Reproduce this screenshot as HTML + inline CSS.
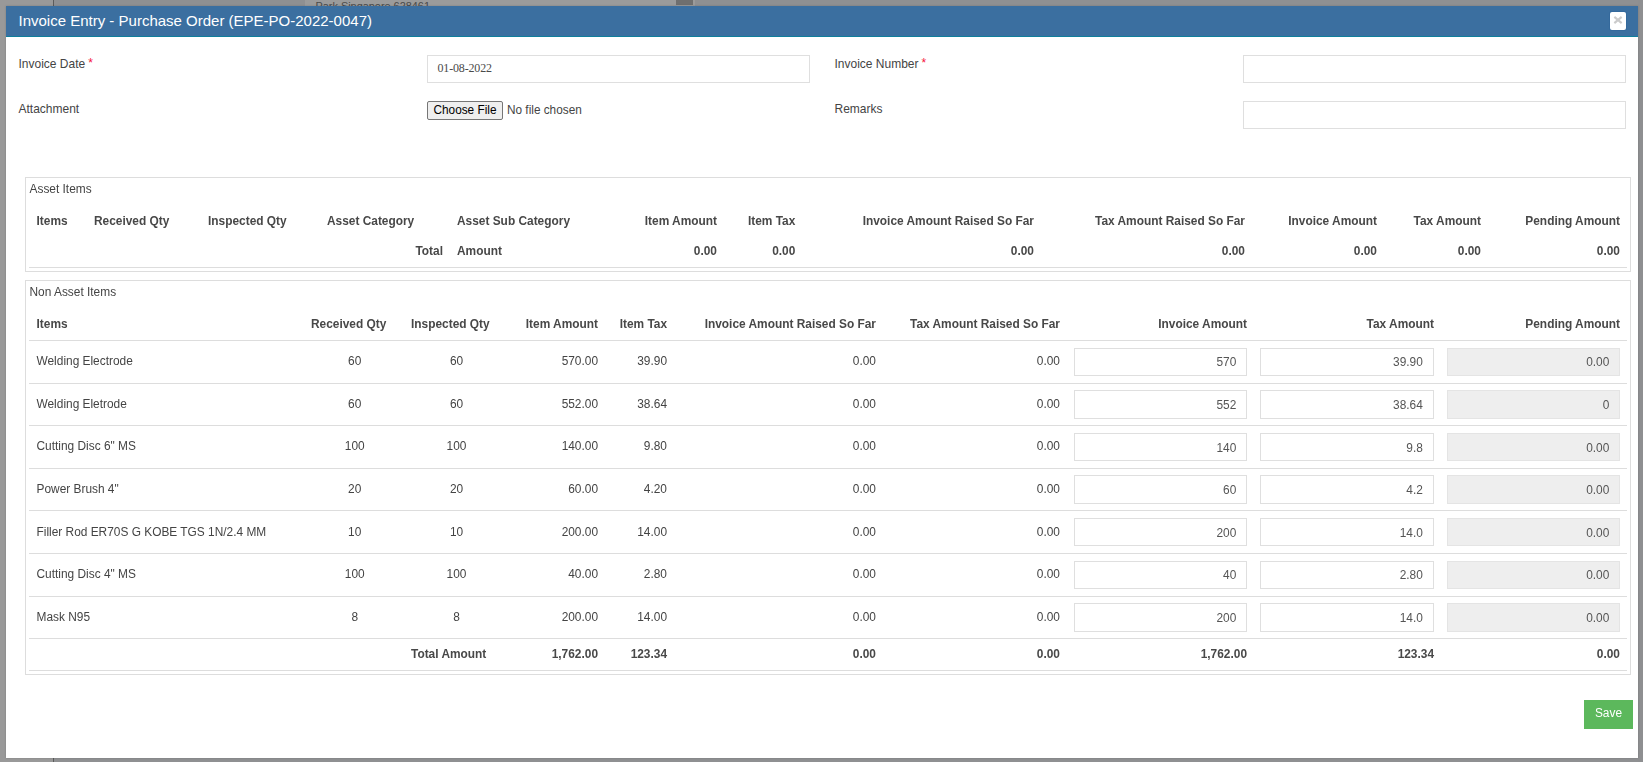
<!DOCTYPE html>
<html><head><meta charset="utf-8"><title>Invoice Entry</title><style>
html,body{margin:0;padding:0;overflow:hidden}
html{width:1643px;height:762px}
body{width:1643px;height:762px;position:relative;overflow:hidden;background:#8f9092;font-family:"Liberation Sans",sans-serif;font-size:11.9px;color:#444}
.b{position:absolute;box-sizing:border-box}
.t{position:absolute;white-space:nowrap;line-height:16px;transform:scaleY(1.08);transform-origin:0 12px}
.g{position:absolute;left:0;top:0;width:1643px;height:762px;will-change:transform}
.inp{border:1px solid #dfdfdf;background:#fff}
.dis{background:#eee;border-color:#e4e4e4}
.panel{border:1px solid #ddd;background:#fff}
</style></head><body>
<div class="b " style="left:0px;top:0px;width:53px;height:762px;background:#999"></div>
<div class="b " style="left:53px;top:0px;width:1px;height:762px;background:#5c5c5c"></div>
<div class="b " style="left:305px;top:0px;width:390px;height:6px;background:#9b9b9b"></div>
<div class="t" style="top:-2.2px;left:315.5px;font-size:10.9px;color:#4a4a4a;">Park Singapore 628461</div>
<div class="b " style="left:676px;top:0px;width:17px;height:5px;background:#6f6f6f"></div>
<div class="b " style="left:1638px;top:0px;width:5px;height:762px;background:#8e8f91"></div>
<div class="b " style="left:6px;top:6px;width:1632px;height:752px;background:#fff;box-shadow:0 0 2px rgba(0,0,0,.18)"></div>
<div class="b " style="left:6px;top:6px;width:1632px;height:30px;background:#3b6fa0"></div>
<div class="b" style="left:6px;top:36px;width:1632px;height:1px;background:#0f7f9c"></div>
<div class="t" style="top:12.5px;left:18.5px;font-size:15px;color:#fff;line-height:20px;top:10.5px;transform:none;">Invoice Entry - Purchase Order (EPE-PO-2022-0047)</div>
<div class="b" style="left:1610px;top:12px;width:16px;height:18px;background:#fff;border-radius:2px;box-shadow:0 0 0 1px rgba(40,95,150,.35)"></div>
<svg class="b" style="left:1610px;top:12px" width="16" height="18" viewBox="0 0 16 18"><path d="M4.35 4.9 L11.65 11.1 M11.65 4.9 L4.35 11.1" stroke="#cbcbcb" stroke-width="2.1" fill="none"/></svg>
<div class="t" style="top:55.5px;left:18.5px;font-size:12px;">Invoice Date <span style="color:#f5143c;position:relative;top:-1px;left:-0.3px">*</span></div>
<div class="t" style="top:101px;left:18.5px;font-size:12px;">Attachment</div>
<div class="t" style="top:55.5px;left:834.5px;font-size:12px;">Invoice Number <span style="color:#f5143c;position:relative;top:-1px;left:-0.3px">*</span></div>
<div class="t" style="top:101px;left:834.5px;font-size:12px;">Remarks</div>
<div class="b inp" style="left:427px;top:55px;width:383px;height:28px;"></div>
<div class="t" style="top:59.5px;left:437.5px;font-size:12px;color:#4a4a4a;font-family:'Liberation Serif',serif;letter-spacing:-0.16px;">01-08-2022</div>
<div class="b inp" style="left:1243px;top:55px;width:383px;height:28px;"></div>
<div class="b inp" style="left:1243px;top:101px;width:383px;height:28px;"></div>
<div class="b" style="left:427px;top:101px;width:76px;height:19px;box-sizing:border-box;border:1px solid #767676;border-radius:2px;background:#efefef"></div>
<div class="t" style="top:101.5px;left:433.5px;font-size:11.8px;color:#000;">Choose File</div>
<div class="t" style="top:101.5px;left:507px;font-size:11.8px;">No file chosen</div>
<div class="g">
<div class="b panel" style="left:25px;top:177px;width:1606px;height:95px;"></div>
<div class="t" style="top:181px;left:29.5px;">Asset Items</div>
<div class="t" style="top:213px;left:36.5px;font-weight:bold;color:#484848;">Items</div>
<div class="t" style="top:213px;left:94px;font-weight:bold;color:#484848;">Received Qty</div>
<div class="t" style="top:213px;left:208px;font-weight:bold;color:#484848;">Inspected Qty</div>
<div class="t" style="top:213px;left:327px;font-weight:bold;color:#484848;">Asset Category</div>
<div class="t" style="top:213px;left:457px;font-weight:bold;color:#484848;">Asset Sub Category</div>
<div class="t" style="top:213px;right:926px;font-weight:bold;color:#484848;">Item Amount</div>
<div class="t" style="top:213px;right:847.7px;font-weight:bold;color:#484848;">Item Tax</div>
<div class="t" style="top:213px;right:609px;font-weight:bold;color:#484848;">Invoice Amount Raised So Far</div>
<div class="t" style="top:213px;right:398px;font-weight:bold;color:#484848;">Tax Amount Raised So Far</div>
<div class="t" style="top:213px;right:266px;font-weight:bold;color:#484848;">Invoice Amount</div>
<div class="t" style="top:213px;right:162px;font-weight:bold;color:#484848;">Tax Amount</div>
<div class="t" style="top:213px;right:23px;font-weight:bold;color:#484848;">Pending Amount</div>
<div class="t" style="top:243px;right:1200px;font-weight:bold;color:#484848;">Total</div>
<div class="t" style="top:243px;left:457px;font-weight:bold;color:#484848;">Amount</div>
<div class="t" style="top:243px;right:926px;font-weight:bold;color:#484848;">0.00</div>
<div class="t" style="top:243px;right:847.7px;font-weight:bold;color:#484848;">0.00</div>
<div class="t" style="top:243px;right:609px;font-weight:bold;color:#484848;">0.00</div>
<div class="t" style="top:243px;right:398px;font-weight:bold;color:#484848;">0.00</div>
<div class="t" style="top:243px;right:266px;font-weight:bold;color:#484848;">0.00</div>
<div class="t" style="top:243px;right:162px;font-weight:bold;color:#484848;">0.00</div>
<div class="t" style="top:243px;right:23px;font-weight:bold;color:#484848;">0.00</div>
<div class="b" style="left:29px;top:267px;width:1598px;height:1px;background:#ddd"></div>
<div class="b panel" style="left:25px;top:280px;width:1606px;height:395px;"></div>
<div class="t" style="top:284px;left:29.5px;">Non Asset Items</div>
<div class="t" style="top:316px;left:36.5px;font-weight:bold;color:#484848;">Items</div>
<div class="t" style="top:316px;left:311px;font-weight:bold;color:#484848;">Received Qty</div>
<div class="t" style="top:316px;left:411px;font-weight:bold;color:#484848;">Inspected Qty</div>
<div class="t" style="top:316px;right:1045px;font-weight:bold;color:#484848;">Item Amount</div>
<div class="t" style="top:316px;right:976px;font-weight:bold;color:#484848;">Item Tax</div>
<div class="t" style="top:316px;right:767px;font-weight:bold;color:#484848;">Invoice Amount Raised So Far</div>
<div class="t" style="top:316px;right:583px;font-weight:bold;color:#484848;">Tax Amount Raised So Far</div>
<div class="t" style="top:316px;right:396px;font-weight:bold;color:#484848;">Invoice Amount</div>
<div class="t" style="top:316px;right:209px;font-weight:bold;color:#484848;">Tax Amount</div>
<div class="t" style="top:316px;right:23px;font-weight:bold;color:#484848;">Pending Amount</div>
<div class="b" style="left:29px;top:340px;width:1598px;height:1px;background:#ddd"></div>
<div class="b" style="left:29px;top:383px;width:1598px;height:1px;background:#ddd"></div>
<div class="b" style="left:29px;top:425px;width:1598px;height:1px;background:#ddd"></div>
<div class="b" style="left:29px;top:468px;width:1598px;height:1px;background:#ddd"></div>
<div class="b" style="left:29px;top:510px;width:1598px;height:1px;background:#ddd"></div>
<div class="b" style="left:29px;top:553px;width:1598px;height:1px;background:#ddd"></div>
<div class="b" style="left:29px;top:596px;width:1598px;height:1px;background:#ddd"></div>
<div class="b" style="left:29px;top:638px;width:1598px;height:1px;background:#ddd"></div>
<div class="b" style="left:29px;top:670px;width:1598px;height:1px;background:#ddd"></div>
<div class="t" style="top:353px;left:36.5px;">Welding Electrode</div>
<div class="t" style="top:353px;left:324.7px;width:60px;text-align:center;">60</div>
<div class="t" style="top:353px;left:426.5px;width:60px;text-align:center;">60</div>
<div class="t" style="top:353px;right:1045px;">570.00</div>
<div class="t" style="top:353px;right:976px;">39.90</div>
<div class="t" style="top:353px;right:767px;">0.00</div>
<div class="t" style="top:353px;right:583px;">0.00</div>
<div class="b inp" style="left:1074px;top:348px;width:173px;height:28px;"></div>
<div class="b inp" style="left:1260px;top:348px;width:174px;height:28px;"></div>
<div class="b inp dis" style="left:1447px;top:348px;width:173px;height:28px;"></div>
<div class="t" style="top:354px;right:406.7px;color:#555;">570</div>
<div class="t" style="top:354px;right:220.2px;color:#555;">39.90</div>
<div class="t" style="top:354px;right:33.7px;color:#555;">0.00</div>
<div class="t" style="top:396px;left:36.5px;">Welding Eletrode</div>
<div class="t" style="top:396px;left:324.7px;width:60px;text-align:center;">60</div>
<div class="t" style="top:396px;left:426.5px;width:60px;text-align:center;">60</div>
<div class="t" style="top:396px;right:1045px;">552.00</div>
<div class="t" style="top:396px;right:976px;">38.64</div>
<div class="t" style="top:396px;right:767px;">0.00</div>
<div class="t" style="top:396px;right:583px;">0.00</div>
<div class="b inp" style="left:1074px;top:390px;width:173px;height:29px;"></div>
<div class="b inp" style="left:1260px;top:390px;width:174px;height:29px;"></div>
<div class="b inp dis" style="left:1447px;top:390px;width:173px;height:29px;"></div>
<div class="t" style="top:397px;right:406.7px;color:#555;">552</div>
<div class="t" style="top:397px;right:220.2px;color:#555;">38.64</div>
<div class="t" style="top:397px;right:33.7px;color:#555;">0</div>
<div class="t" style="top:438px;left:36.5px;">Cutting Disc 6" MS</div>
<div class="t" style="top:438px;left:324.7px;width:60px;text-align:center;">100</div>
<div class="t" style="top:438px;left:426.5px;width:60px;text-align:center;">100</div>
<div class="t" style="top:438px;right:1045px;">140.00</div>
<div class="t" style="top:438px;right:976px;">9.80</div>
<div class="t" style="top:438px;right:767px;">0.00</div>
<div class="t" style="top:438px;right:583px;">0.00</div>
<div class="b inp" style="left:1074px;top:433px;width:173px;height:28px;"></div>
<div class="b inp" style="left:1260px;top:433px;width:174px;height:28px;"></div>
<div class="b inp dis" style="left:1447px;top:433px;width:173px;height:28px;"></div>
<div class="t" style="top:440px;right:406.7px;color:#555;">140</div>
<div class="t" style="top:440px;right:220.2px;color:#555;">9.8</div>
<div class="t" style="top:440px;right:33.7px;color:#555;">0.00</div>
<div class="t" style="top:481px;left:36.5px;">Power Brush 4"</div>
<div class="t" style="top:481px;left:324.7px;width:60px;text-align:center;">20</div>
<div class="t" style="top:481px;left:426.5px;width:60px;text-align:center;">20</div>
<div class="t" style="top:481px;right:1045px;">60.00</div>
<div class="t" style="top:481px;right:976px;">4.20</div>
<div class="t" style="top:481px;right:767px;">0.00</div>
<div class="t" style="top:481px;right:583px;">0.00</div>
<div class="b inp" style="left:1074px;top:475px;width:173px;height:29px;"></div>
<div class="b inp" style="left:1260px;top:475px;width:174px;height:29px;"></div>
<div class="b inp dis" style="left:1447px;top:475px;width:173px;height:29px;"></div>
<div class="t" style="top:482px;right:406.7px;color:#555;">60</div>
<div class="t" style="top:482px;right:220.2px;color:#555;">4.2</div>
<div class="t" style="top:482px;right:33.7px;color:#555;">0.00</div>
<div class="t" style="top:524px;left:36.5px;">Filler Rod ER70S G KOBE TGS 1N/2.4 MM</div>
<div class="t" style="top:524px;left:324.7px;width:60px;text-align:center;">10</div>
<div class="t" style="top:524px;left:426.5px;width:60px;text-align:center;">10</div>
<div class="t" style="top:524px;right:1045px;">200.00</div>
<div class="t" style="top:524px;right:976px;">14.00</div>
<div class="t" style="top:524px;right:767px;">0.00</div>
<div class="t" style="top:524px;right:583px;">0.00</div>
<div class="b inp" style="left:1074px;top:518px;width:173px;height:28px;"></div>
<div class="b inp" style="left:1260px;top:518px;width:174px;height:28px;"></div>
<div class="b inp dis" style="left:1447px;top:518px;width:173px;height:28px;"></div>
<div class="t" style="top:525px;right:406.7px;color:#555;">200</div>
<div class="t" style="top:525px;right:220.2px;color:#555;">14.0</div>
<div class="t" style="top:525px;right:33.7px;color:#555;">0.00</div>
<div class="t" style="top:566px;left:36.5px;">Cutting Disc 4" MS</div>
<div class="t" style="top:566px;left:324.7px;width:60px;text-align:center;">100</div>
<div class="t" style="top:566px;left:426.5px;width:60px;text-align:center;">100</div>
<div class="t" style="top:566px;right:1045px;">40.00</div>
<div class="t" style="top:566px;right:976px;">2.80</div>
<div class="t" style="top:566px;right:767px;">0.00</div>
<div class="t" style="top:566px;right:583px;">0.00</div>
<div class="b inp" style="left:1074px;top:561px;width:173px;height:28px;"></div>
<div class="b inp" style="left:1260px;top:561px;width:174px;height:28px;"></div>
<div class="b inp dis" style="left:1447px;top:561px;width:173px;height:28px;"></div>
<div class="t" style="top:567px;right:406.7px;color:#555;">40</div>
<div class="t" style="top:567px;right:220.2px;color:#555;">2.80</div>
<div class="t" style="top:567px;right:33.7px;color:#555;">0.00</div>
<div class="t" style="top:609px;left:36.5px;">Mask N95</div>
<div class="t" style="top:609px;left:324.7px;width:60px;text-align:center;">8</div>
<div class="t" style="top:609px;left:426.5px;width:60px;text-align:center;">8</div>
<div class="t" style="top:609px;right:1045px;">200.00</div>
<div class="t" style="top:609px;right:976px;">14.00</div>
<div class="t" style="top:609px;right:767px;">0.00</div>
<div class="t" style="top:609px;right:583px;">0.00</div>
<div class="b inp" style="left:1074px;top:603px;width:173px;height:29px;"></div>
<div class="b inp" style="left:1260px;top:603px;width:174px;height:29px;"></div>
<div class="b inp dis" style="left:1447px;top:603px;width:173px;height:29px;"></div>
<div class="t" style="top:610px;right:406.7px;color:#555;">200</div>
<div class="t" style="top:610px;right:220.2px;color:#555;">14.0</div>
<div class="t" style="top:610px;right:33.7px;color:#555;">0.00</div>
<div class="t" style="top:646px;left:411px;font-weight:bold;color:#484848;">Total Amount</div>
<div class="t" style="top:646px;right:1045px;font-weight:bold;color:#484848;">1,762.00</div>
<div class="t" style="top:646px;right:976px;font-weight:bold;color:#484848;">123.34</div>
<div class="t" style="top:646px;right:767px;font-weight:bold;color:#484848;">0.00</div>
<div class="t" style="top:646px;right:583px;font-weight:bold;color:#484848;">0.00</div>
<div class="t" style="top:646px;right:396px;font-weight:bold;color:#484848;">1,762.00</div>
<div class="t" style="top:646px;right:209px;font-weight:bold;color:#484848;">123.34</div>
<div class="t" style="top:646px;right:23px;font-weight:bold;color:#484848;">0.00</div>
</div>
<div class="b " style="left:1584px;top:700px;width:49px;height:29px;background:#5cb85c"></div>
<div class="t" style="top:705px;left:1578.5px;width:60px;text-align:center;color:#fff;">Save</div>
</body></html>
